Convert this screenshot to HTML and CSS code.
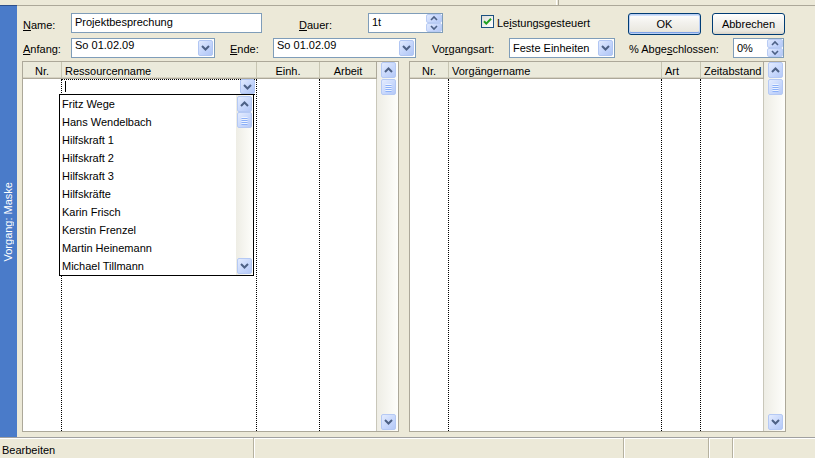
FILE: index.html
```html
<!DOCTYPE html>
<html lang="de">
<head>
<meta charset="utf-8">
<title>Vorgang: Maske</title>
<link rel="stylesheet" href="styles.css">
</head>
<body>
<svg class="sprite" width="0" height="0" aria-hidden="true">
  <symbol id="dn" viewBox="0 0 13 14"><path d="M3 5l3.5 3.5L10 5" fill="none" stroke="#4D6185" stroke-width="2"/></symbol>
  <symbol id="up" viewBox="0 0 13 14"><path d="M3 9l3.5-3.5L10 9" fill="none" stroke="#4D6185" stroke-width="2"/></symbol>
  <symbol id="grip" viewBox="0 0 13 14">
    <path d="M3.5 4.5h6M3.5 6.5h6M3.5 8.5h6M3.5 10.5h6" stroke="#EEF4FE" stroke-width="1"/>
    <path d="M3.5 5.5h6M3.5 7.5h6M3.5 9.5h6M3.5 11.5h6" stroke="#8CB0F8" stroke-width="1"/>
  </symbol>
  <symbol id="sup" viewBox="0 0 14 7"><path d="M4 5l3-3 3 3" fill="none" stroke="#4D6185" stroke-width="1.6"/></symbol>
  <symbol id="sdn" viewBox="0 0 14 7"><path d="M4 2l3 3 3-3" fill="none" stroke="#4D6185" stroke-width="1.6"/></symbol>
</svg>

<div class="top"><span class="top-sep"></span></div>

<div class="main">
  <div class="side"><span class="side-label">Vorgang: Maske</span></div>

  <div class="content">
    <div class="row row1">
      <span class="lbl lbl-name"><u>N</u>ame:</span>
      <div class="field f-name"><span class="ftext pt2">Projektbesprechung</span></div>
      <span class="lbl lbl-dauer"><u>D</u>auer:</span>
      <div class="field f-dauer">
        <span class="ftext pt2">1t</span>
        <div class="spin">
          <span class="spin-btn"><svg><use href="#sup"/></svg></span>
          <span class="spin-btn"><svg><use href="#sdn"/></svg></span>
        </div>
      </div>
      <div class="check">
        <span class="checkbox"><svg viewBox="0 0 11 11"><path d="M2 5.2l2.3 2.4L9 2.8" fill="none" stroke="#21A121" stroke-width="2"/></svg></span>
        <span class="check-text">Le<u>i</u>stungsgesteuert</span>
      </div>
      <button class="btn btn-default">OK</button>
      <button class="btn btn-cancel">Abbrechen</button>
    </div>

    <div class="row row2">
      <span class="lbl lbl-anfang"><u>A</u>nfang:</span>
      <div class="field f-anfang"><span class="ftext">So 01.02.09</span><span class="dbtn"><svg><use href="#dn"/></svg></span></div>
      <span class="lbl lbl-ende"><u>E</u>nde:</span>
      <div class="field f-ende"><span class="ftext">So 01.02.09</span><span class="dbtn"><svg><use href="#dn"/></svg></span></div>
      <span class="lbl lbl-art">Vo<u>r</u>gangsart:</span>
      <div class="field f-art"><span class="ftext pt3">Feste Einheiten</span><span class="dbtn"><svg><use href="#dn"/></svg></span></div>
      <span class="lbl lbl-pct">% Abge<u>s</u>chlossen:</span>
      <div class="field f-pct">
        <span class="ftext pt3">0%</span>
        <div class="spin">
          <span class="spin-btn"><svg><use href="#sup"/></svg></span>
          <span class="spin-btn"><svg><use href="#sdn"/></svg></span>
        </div>
      </div>
    </div>

    <div class="grids">
      <div class="panel">
        <div class="table">
          <div class="thead cols-left">
            <div class="th c">Nr.</div>
            <div class="th">Ressourcenname</div>
            <div class="th c">Einh.</div>
            <div class="th c">Arbeit</div>
          </div>
          <div class="tbody cols-left">
            <div class="td"></div>
            <div class="td">
              <div class="edit"><span class="caret"></span><span class="ebtn"><svg><use href="#dn"/></svg></span></div>
            </div>
            <div class="td"></div>
            <div class="td"></div>
          </div>
          <div class="dropdown">
            <div class="dd-items">
              <div class="dd-item">Fritz Wege</div>
              <div class="dd-item">Hans Wendelbach</div>
              <div class="dd-item">Hilfskraft 1</div>
              <div class="dd-item">Hilfskraft 2</div>
              <div class="dd-item">Hilfskraft 3</div>
              <div class="dd-item">Hilfskräfte</div>
              <div class="dd-item">Karin Frisch</div>
              <div class="dd-item">Kerstin Frenzel</div>
              <div class="dd-item">Martin Heinemann</div>
              <div class="dd-item">Michael Tillmann</div>
            </div>
            <div class="vscroll dd-scroll">
              <span class="sbtn"><svg><use href="#up"/></svg></span>
              <span class="sbtn thumb"><svg><use href="#grip"/></svg></span>
              <span class="spacer"></span>
              <span class="sbtn"><svg><use href="#dn"/></svg></span>
            </div>
          </div>
        </div>
        <div class="vscroll grid-scroll">
          <span class="sbtn"><svg><use href="#up"/></svg></span>
          <span class="sbtn thumb gap"><svg><use href="#grip"/></svg></span>
          <span class="spacer"></span>
          <span class="sbtn"><svg><use href="#dn"/></svg></span>
        </div>
      </div>

      <div class="panel panel-right">
        <div class="table">
          <div class="thead cols-right">
            <div class="th c">Nr.</div>
            <div class="th">Vorgängername</div>
            <div class="th">Art</div>
            <div class="th">Zeitabstand</div>
          </div>
          <div class="tbody cols-right">
            <div class="td"></div>
            <div class="td"></div>
            <div class="td"></div>
            <div class="td"></div>
          </div>
        </div>
        <div class="vscroll grid-scroll">
          <span class="sbtn"><svg><use href="#up"/></svg></span>
          <span class="sbtn thumb gap"><svg><use href="#grip"/></svg></span>
          <span class="spacer"></span>
          <span class="sbtn"><svg><use href="#dn"/></svg></span>
        </div>
      </div>
    </div>
  </div>
</div>

<div class="status">
  <div class="seg s1">Bearbeiten</div>
  <div class="seg s2"></div>
  <div class="seg s3"></div>
  <div class="seg s4"></div>
  <div class="seg s5"></div>
</div>
</body>
</html>
```

FILE: styles.css
```css
* { box-sizing: border-box; }
html, body { margin: 0; padding: 0; }
body {
  width: 815px;
  height: 458px;
  overflow: hidden;
  background: #ECE9D8;
  font-family: "Liberation Sans", Arial, sans-serif;
  font-size: 11px;
  line-height: 13px;
  color: #000;
  display: flex;
  flex-direction: column;
}
.sprite { position: absolute; width: 0; height: 0; overflow: hidden; }
u { text-decoration: underline; text-underline-offset: 1px; }

/* top strip */
.top {
  height: 6px;
  flex: none;
  border-bottom: 1px solid #ACA899;
  display: flex;
  padding-left: 556px;
}
.top-sep {
  width: 3px;
  height: 5px;
  border-left: 1px solid #fff;
  border-right: 1px solid #ACA899;
}

.main { flex: 1; display: flex; min-height: 0; }

.side {
  width: 17px;
  flex: none;
  background: #4A7BC9;
  border-top: 1px solid #2C4F8A;
  margin-top: -1px;
  display: flex;
  align-items: center;
  justify-content: center;
}
.side-label {
  writing-mode: vertical-rl;
  transform: rotate(180deg);
  color: #fff;
  white-space: nowrap;
}

.content {
  flex: 1;
  min-width: 0;
  display: flex;
  flex-direction: column;
  padding: 7px 0 5px 0;
}

/* form rows */
.row { display: flex; align-items: flex-start; padding-left: 6px; flex: none; }
.row1 { height: 22px; }
.row2 { height: 20px; margin-top: 3px; }

.lbl { flex: none; white-space: nowrap; height: 20px; }
.row1 .lbl { padding-top: 6px; }
.row2 .lbl { padding-top: 5px; }
.lbl-name, .lbl-anfang { width: 48px; }
.lbl-dauer { margin-left: 37px; width: 69px; }
.lbl-ende { margin-left: 15px; width: 43px; }
.lbl-art { margin-left: 16px; width: 77px; }
.lbl-pct { margin-left: 14px; width: 104px; }

.field {
  flex: none;
  height: 20px;
  border: 1px solid #7F9DB9;
  background: #fff;
  display: flex;
  align-items: flex-start;
}
.ftext { flex: 1; padding-left: 3px; white-space: nowrap; overflow: hidden; }
.pt2 { padding-top: 2px; }
.pt3 { padding-top: 3px; }
.f-name { width: 191px; }
.f-dauer { width: 75px; }
.f-anfang { width: 144px; }
.f-ende { width: 143px; }
.f-art { width: 106px; }
.f-pct { width: 51px; }

.dbtn {
  width: 15px;
  height: 16px;
  margin: 1px 1px 0 0;
  border: 1px solid #B1C6F3;
  border-radius: 2px;
  background: linear-gradient(135deg, #E1EAFE 0%, #C4D5FB 55%, #AFC5F5 100%);
  display: flex;
}
.dbtn svg, .ebtn svg, .sbtn svg { width: 13px; height: 14px; }

.spin { width: 16px; height: 18px; display: flex; flex-direction: column; }
.spin-btn {
  height: 9px;
  border: 1px solid #B9CCF4;
  border-radius: 2px;
  background: linear-gradient(135deg, #E1EAFE 0%, #C6D6FB 55%, #B4C8F6 100%);
  display: flex;
}
.spin-btn svg { width: 14px; height: 7px; }

.check {
  flex: none;
  margin-left: 38px;
  width: 147px;
  margin-top: 2px;
  display: flex;
  align-items: flex-start;
  gap: 3px;
}
.checkbox {
  width: 13px;
  height: 13px;
  border: 1px solid #1C5180;
  background: linear-gradient(135deg, #DCDCD7 0%, #F4F4F0 60%, #FFFFFF 100%);
  display: flex;
}
.checkbox svg { width: 11px; height: 11px; }
.check-text { padding-top: 2px; white-space: nowrap; }

.btn {
  flex: none;
  width: 73px;
  height: 22px;
  padding: 0;
  font: inherit;
  color: #000;
  border: 1px solid #003C74;
  border-radius: 3px;
  background: linear-gradient(#FFFFFF 0%, #F3F2EE 40%, #EAE8E0 85%, #D8D2C6 100%);
}
.btn-default {
  box-shadow: inset 0 0 0 1px #BCD0F4, inset 0 -1px 0 1px #7DA2E8, inset 0 1px 0 1px #CEE0FC;
}
.btn-cancel { margin-left: 11px; }

/* grids */
.grids {
  flex: 1;
  min-height: 0;
  display: flex;
  margin-top: 3px;
  padding-left: 5px;
}
.panel {
  display: flex;
  border: 1px solid #ACA899;
  background: #fff;
}
.panel-right { margin-left: 10px; }

.table {
  width: 354px;
  display: flex;
  flex-direction: column;
  position: relative;
}
.cols-left { display: grid; grid-template-columns: 39px 195px 63px 57px; }
.cols-right { display: grid; grid-template-columns: 39px 213px 39px 63px; }
.thead {
  height: 17px;
  background: #EBEADB;
  border-bottom: 1px solid #ACA899;
  box-shadow: inset 0 -1px #D6D2C2;
}
.th {
  border-right: 1px solid #C7C5B2;
  padding: 3px 0 0 3px;
  white-space: nowrap;
  overflow: hidden;
}
.th.c { text-align: center; padding-left: 0; }
.thead .th:last-child { border-right-color: #ACA899; }

.tbody { flex: 1; }
.td { border-right: 1px dotted #000; }
.tbody .td:last-child { border-right: 1px solid #C9C7BA; }

.edit {
  height: 16px;
  margin: 0 -1px;
  border: 1px dotted #000;
  background: #fff;
  display: flex;
  justify-content: space-between;
  align-items: flex-start;
}
.caret { width: 1px; height: 11px; margin: 1px 0 0 3px; background: #000; }
.ebtn {
  width: 15px;
  height: 15px;
  margin: -1px 1px 0 0;
  border: 1px solid #B1C6F3;
  border-radius: 2px;
  background: linear-gradient(135deg, #E1EAFE 0%, #C4D5FB 55%, #AFC5F5 100%);
  display: flex;
}

.dropdown {
  position: absolute;
  left: 36px;
  top: 32px;
  width: 195px;
  height: 182px;
  border: 1px solid #000;
  background: #fff;
  display: flex;
  z-index: 2;
}
.dd-items { flex: 1; }
.dd-item { height: 18px; line-height: 18px; padding-left: 2px; white-space: nowrap; }

/* scrollbars */
.vscroll {
  display: flex;
  flex-direction: column;
  background: linear-gradient(to right, #EEEDE5, #FEFEFB);
}
.grid-scroll { width: 21px; padding: 0 2px 1px 4px; }
.dd-scroll { width: 17px; padding: 1px 1px 1px 1px; }
.spacer { flex: 1; }
.sbtn {
  flex: none;
  width: 15px;
  height: 16px;
  border: 1px solid #B5C9F4;
  border-radius: 2px;
  background: linear-gradient(135deg, #E4ECFE 0%, #C8D8FC 55%, #B5C9F7 100%);
  display: flex;
}
.sbtn.gap { margin-top: 1px; }

/* status bar */
.status {
  height: 21px;
  flex: none;
  border-top: 1px solid #A0A0A0;
  box-shadow: inset 0 1px #FFFFFF;
  display: flex;
}
.seg { padding: 6px 0 0 2px; white-space: nowrap; }
.seg + .seg { border-left: 1px solid #B5B19F; box-shadow: inset 1px 0 #FFFFFF; }
.s1 { width: 253px; }
.s2 { width: 370px; }
.s3 { width: 85px; }
.s4 { width: 24px; }
.s5 { flex: 1; }
```
